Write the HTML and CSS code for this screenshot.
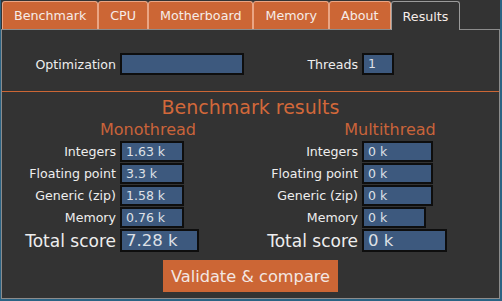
FILE: index.html
```html
<!DOCTYPE html>
<html lang="en">
<head>
  <meta charset="UTF-8">
  <title>Results</title>
  <link rel="stylesheet" href="styles.css">
</head>
<body>
  <div class="window">
    <div class="tabs">
      <div class="tab">Benchmark</div>
      <div class="tab">CPU</div>
      <div class="tab">Motherboard</div>
      <div class="tab">Memory</div>
      <div class="tab">About</div>
      <div class="tab active">Results</div>
    </div>
    <div class="pane">
      <!-- Settings row -->
      <div class="cols top-row">
        <div class="field">
          <span class="label">Optimization</span>
          <span class="box w-opt"></span>
        </div>
        <div class="field">
          <span class="label">Threads</span>
          <span class="box w-thr">1</span>
        </div>
      </div>
      <div class="sep"></div>
      <h1 class="title">Benchmark results</h1>
      <div class="cols">
        <div class="col">
          <h2 class="subtitle">Monothread</h2>
          <div class="field"><span class="label">Integers</span><span class="box w-64">1.63 k</span></div>
          <div class="field"><span class="label">Floating point</span><span class="box w-64">3.3 k</span></div>
          <div class="field"><span class="label">Generic (zip)</span><span class="box w-64">1.58 k</span></div>
          <div class="field"><span class="label">Memory</span><span class="box w-64">0.76 k</span></div>
          <div class="field total"><span class="label">Total score</span><span class="box w-79">7.28 k</span></div>
        </div>
        <div class="col">
          <h2 class="subtitle">Multithread</h2>
          <div class="field"><span class="label">Integers</span><span class="box w-71">0 k</span></div>
          <div class="field"><span class="label">Floating point</span><span class="box w-71">0 k</span></div>
          <div class="field"><span class="label">Generic (zip)</span><span class="box w-71">0 k</span></div>
          <div class="field"><span class="label">Memory</span><span class="box w-64">0 k</span></div>
          <div class="field total"><span class="label">Total score</span><span class="box w-85">0 k</span></div>
        </div>
      </div>
      <div class="actions">
        <button class="validate-btn">Validate &amp; compare</button>
      </div>
    </div>
  </div>
</body>
</html>
```

FILE: styles.css
```css
body {
  margin: 0;
  background: #2b6384;
  font-family: "DejaVu Sans", Verdana, sans-serif;
}
.window {
  margin: 0 2px 2px 1px;
  height: 299px;
  background: #333333;
  display: flex;
  flex-direction: column;
}
/* Tab bar */
.tabs {
  display: flex;
  align-items: flex-end;
  height: 30px;
  box-sizing: border-box;
  padding-left: 1px;
  border-bottom: 1px solid #8c8c8c;
}
.tab {
  height: 28px;
  box-sizing: border-box;
  padding: 0 11px;
  display: flex;
  align-items: center;
  background: #cc6635;
  color: #f6ece8;
  font-size: 12.7px;
  border: 1px solid #eaa584;
  border-bottom: none;
  border-radius: 3px 3px 0 0;
}
.tab.active {
  height: 29px;
  margin-bottom: -1px;
  background: #333333;
  border-color: #9a9a9a;
}
/* Page body */
.pane {
  flex: 1;
  border: 1px solid #8c8c8c;
  border-top: none;
  color: #eeeeee;
  font-size: 12.6px;
}
.cols {
  display: grid;
  grid-template-columns: 242px 242px;
}
.top-row {
  margin-top: 23px;
}
.field {
  display: grid;
  grid-template-columns: 114px auto;
  column-gap: 4px;
  align-items: center;
  justify-items: start;
  margin-bottom: 1px;
}
.label {
  justify-self: end;
  white-space: nowrap;
}
.box {
  display: block;
  height: 21px;
  box-sizing: border-box;
  padding: 0 4px;
  line-height: 17px;
  background: #3d597e;
  border: 2px solid #0e0e0e;
  color: #dde0e6;
  font-size: 12.5px;
  white-space: nowrap;
}
.top-row .box { height: 22px; }
.w-opt { width: 124px; }
.w-thr { width: 32px; }
.w-64 { width: 64px; }
.w-71 { width: 71px; }
.w-79 { width: 79px; }
.w-85 { width: 85px; }
.field.total .label {
  font-size: 17px;
}
.field.total .box {
  height: 23px;
  line-height: 19px;
  font-size: 16.5px;
}
.sep {
  height: 1px;
  margin-top: 15px;
  background: #cc6635;
}
.title {
  margin: 4px 0 0;
  font-size: 19px;
  font-weight: normal;
  line-height: 22px;
  text-align: center;
  color: #d2683a;
}
.subtitle {
  margin: 3px 0 2px;
  padding-left: 50px;
  font-size: 16px;
  font-weight: normal;
  line-height: 18px;
  text-align: center;
  color: #c9633a;
}
.actions {
  text-align: center;
  margin-top: 7px;
}
.validate-btn {
  height: 32px;
  padding: 0 8px;
  border: none;
  background: #cc6635;
  color: #f3e7e3;
  font-family: "DejaVu Sans", Verdana, sans-serif;
  font-size: 16.2px;
}
```
